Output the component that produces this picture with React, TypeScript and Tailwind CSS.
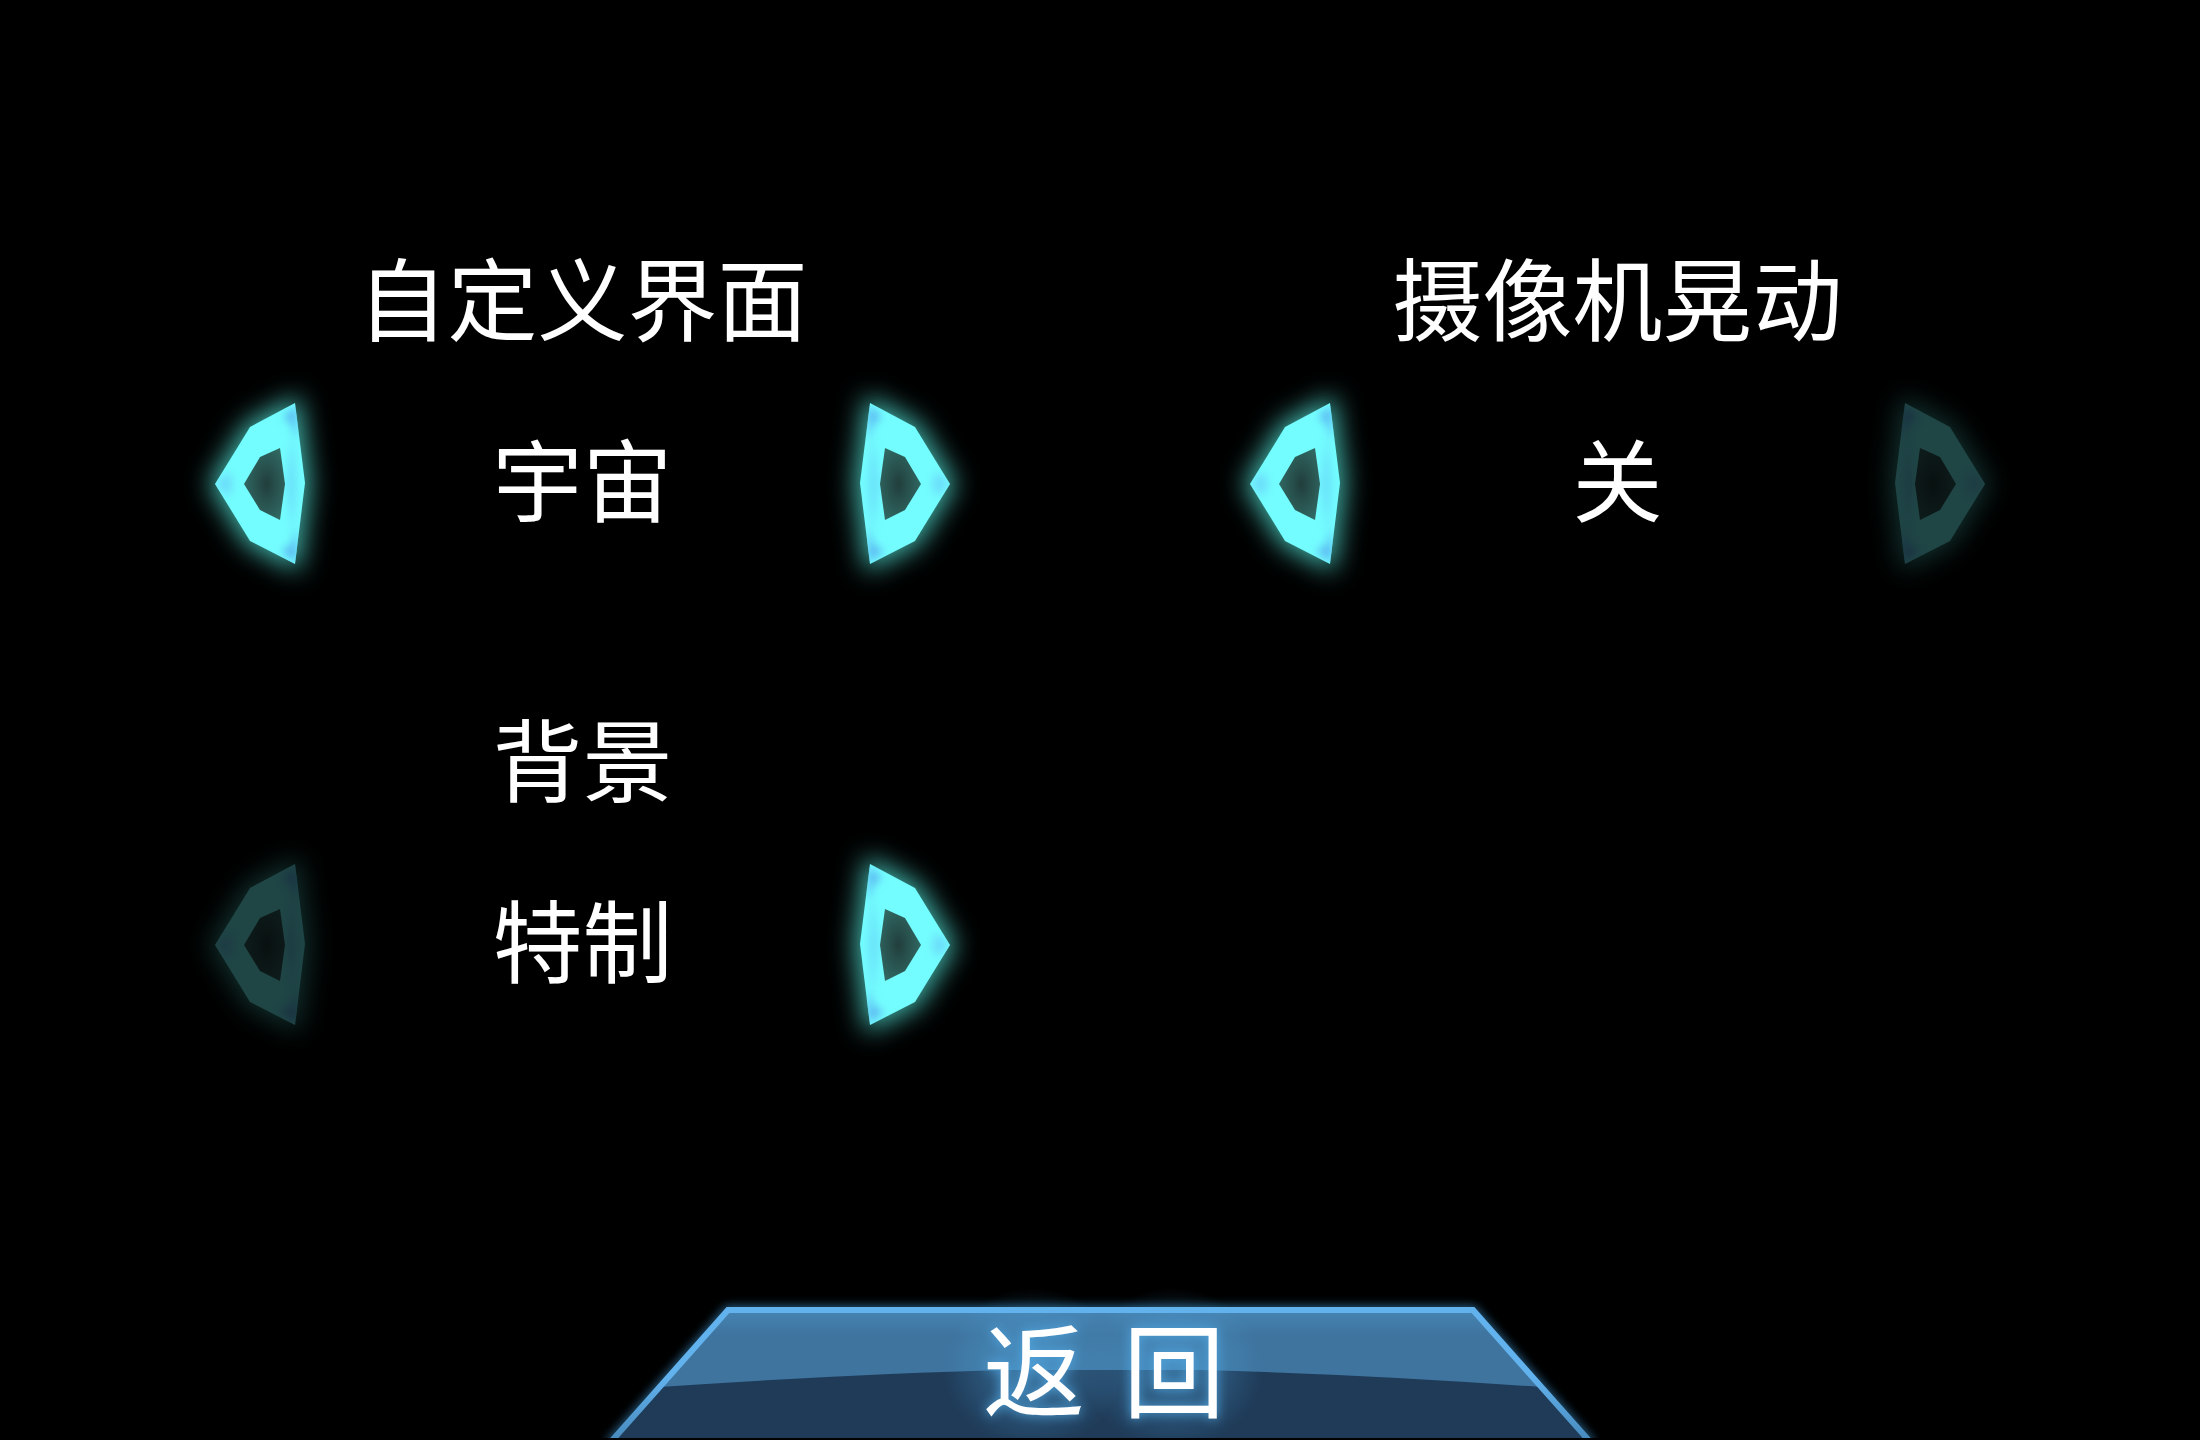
import { useId, useState } from "react"

type ArrowButtonProps = {
  direction: "left" | "right"
  label: string
  disabled: boolean
  onClick: () => void
}

const OUTER = "M0 81 35 24 80 0 90 80 80 161 35 138Z"
const INNER = "M29 81 45 54 65 45 70 81 65 117 45 107Z"

function ArrowButton({ direction, label, disabled, onClick }: ArrowButtonProps) {
  const id = useId()

  return (
    <button
      type="button"
      aria-label={label}
      disabled={disabled}
      onClick={onClick}
      className="shrink-0 cursor-pointer disabled:cursor-default disabled:opacity-[0.27]"
    >
      <svg
        viewBox="0 0 90 162"
        className={
          direction === "right"
            ? "block h-[162px] w-[90px] -scale-x-100 overflow-visible"
            : "block h-[162px] w-[90px] overflow-visible"
        }
      >
        <defs>
          <filter id={`${id}glow`} x="-60%" y="-40%" width="220%" height="180%">
            <feGaussianBlur stdDeviation="13" />
          </filter>
          <filter id={`${id}soft`} x="-20%" y="-20%" width="140%" height="140%">
            <feGaussianBlur stdDeviation="4" />
          </filter>
          <radialGradient id={`${id}core`} cx="0.55" cy="0.5" r="0.6">
            <stop offset="0" stopColor="#213e3c" />
            <stop offset="1" stopColor="#326c66" />
          </radialGradient>
          <clipPath id={`${id}ring`}>
            <path d={`${OUTER}${INNER}`} clipRule="evenodd" />
          </clipPath>
        </defs>
        <path
          d={OUTER}
          fill="#43b5ac"
          stroke="#43b5ac"
          strokeWidth="10"
          filter={`url(#${id}glow)`}
        />
        <path d={OUTER} fill="#73fdfe" />
        <g clipPath={`url(#${id}ring)`}>
          <g filter={`url(#${id}soft)`}>
            <path d="M82 2 68 14 76 20 82 38Z" fill="#5cb8f2" />
            <path d="M82 160 66 148 76 142 82 124Z" fill="#5cb8f2" />
            <path d="M0 81 14 68 18 81 14 94Z" fill="#6cdcfa" />
            <path d="M78 30 82 81 78 132 70 81Z" fill="#6be2fa" />
          </g>
        </g>
        <path d={INNER} fill={`url(#${id}core)`} />
      </svg>
    </button>
  )
}

type OptionStepperProps = {
  title: string
  options: string[]
  initial: number
}

function OptionStepper({ title, options, initial }: OptionStepperProps) {
  const [index, setIndex] = useState(initial)

  return (
    <section className="mx-auto flex w-full max-w-[735px] flex-col gap-[55px] text-[90px] leading-none">
      <h2 className="text-center">{title}</h2>
      <div className="flex items-center justify-between">
        <ArrowButton
          direction="left"
          label={`${title} 上一个`}
          disabled={index === 0}
          onClick={() => setIndex(index - 1)}
        />
        <output>{options[index]}</output>
        <ArrowButton
          direction="right"
          label={`${title} 下一个`}
          disabled={index === options.length - 1}
          onClick={() => setIndex(index + 1)}
        />
      </div>
    </section>
  )
}

function BackButton() {
  return (
    <button
      type="button"
      aria-label="返回"
      className="relative mx-auto mb-[2px] h-[130px] w-[980px] max-w-full cursor-pointer"
    >
      <svg
        viewBox="0 0 980 130"
        preserveAspectRatio="none"
        className="absolute inset-0 h-full w-full overflow-visible"
      >
        <defs>
          <filter id="edge-glow" x="-5%" y="-30%" width="110%" height="160%">
            <feGaussianBlur stdDeviation="5" />
          </filter>
          <linearGradient id="edge" x1="0" y1="0" x2="0" y2="1">
            <stop offset="0.5" stopColor="#62b2ee" />
            <stop offset="1" stopColor="#4688ba" />
          </linearGradient>
          <linearGradient id="panel" x1="0" y1="0" x2="0" y2="1">
            <stop offset="0" stopColor="#4684b3" />
            <stop offset="0.2" stopColor="#3e749e" />
          </linearGradient>
          <radialGradient id="halo">
            <stop offset="0" stopColor="#52a8e2" stopOpacity="0.5" />
            <stop offset="1" stopColor="#52a8e2" stopOpacity="0" />
          </radialGradient>
          <clipPath id="bar">
            <path d="M-30 -30H1010V130H-30Z" />
          </clipPath>
        </defs>
        <g clipPath="url(#bar)">
          <path
            d="M-1 136 118 2H863L982 136"
            fill="none"
            stroke="#2a6690"
            strokeWidth="8"
            filter="url(#edge-glow)"
          />
          <path d="M4 130 118 2H863L977 130Z" fill="url(#panel)" />
          <path
            d="M4 130 50 79Q240 66 400 62H590Q750 66 931 79L977 130Z"
            fill="#1f3b58"
          />
          <ellipse cx="423" cy="60" rx="90" ry="80" fill="url(#halo)" />
          <ellipse cx="563" cy="60" rx="90" ry="80" fill="url(#halo)" />
          <path
            d="M-1 136 118 2H863L982 136"
            fill="none"
            stroke="url(#edge)"
            strokeWidth="6"
          />
        </g>
      </svg>
      <span className="relative flex items-center justify-center gap-[38px] pt-1 pl-2 text-[102px] leading-none text-white [text-shadow:0_0_12px_#52a8e2]">
        <span>返</span>
        <span>回</span>
      </span>
    </button>
  )
}

export default function App() {
  return (
    <main className="flex min-h-screen flex-col bg-black font-['Liberation_Sans','Noto_Sans_CJK_SC',sans-serif] text-white">
      <div className="grid grid-cols-2 gap-y-[154px] px-[65px] pt-[258px]">
        <OptionStepper title="自定义界面" options={["默认", "宇宙", "简约"]} initial={1} />
        <OptionStepper title="摄像机晃动" options={["开", "关"]} initial={1} />
        <OptionStepper title="背景" options={["特制", "普通"]} initial={0} />
      </div>
      <div className="mt-auto flex">
        <BackButton />
      </div>
    </main>
  )
}
